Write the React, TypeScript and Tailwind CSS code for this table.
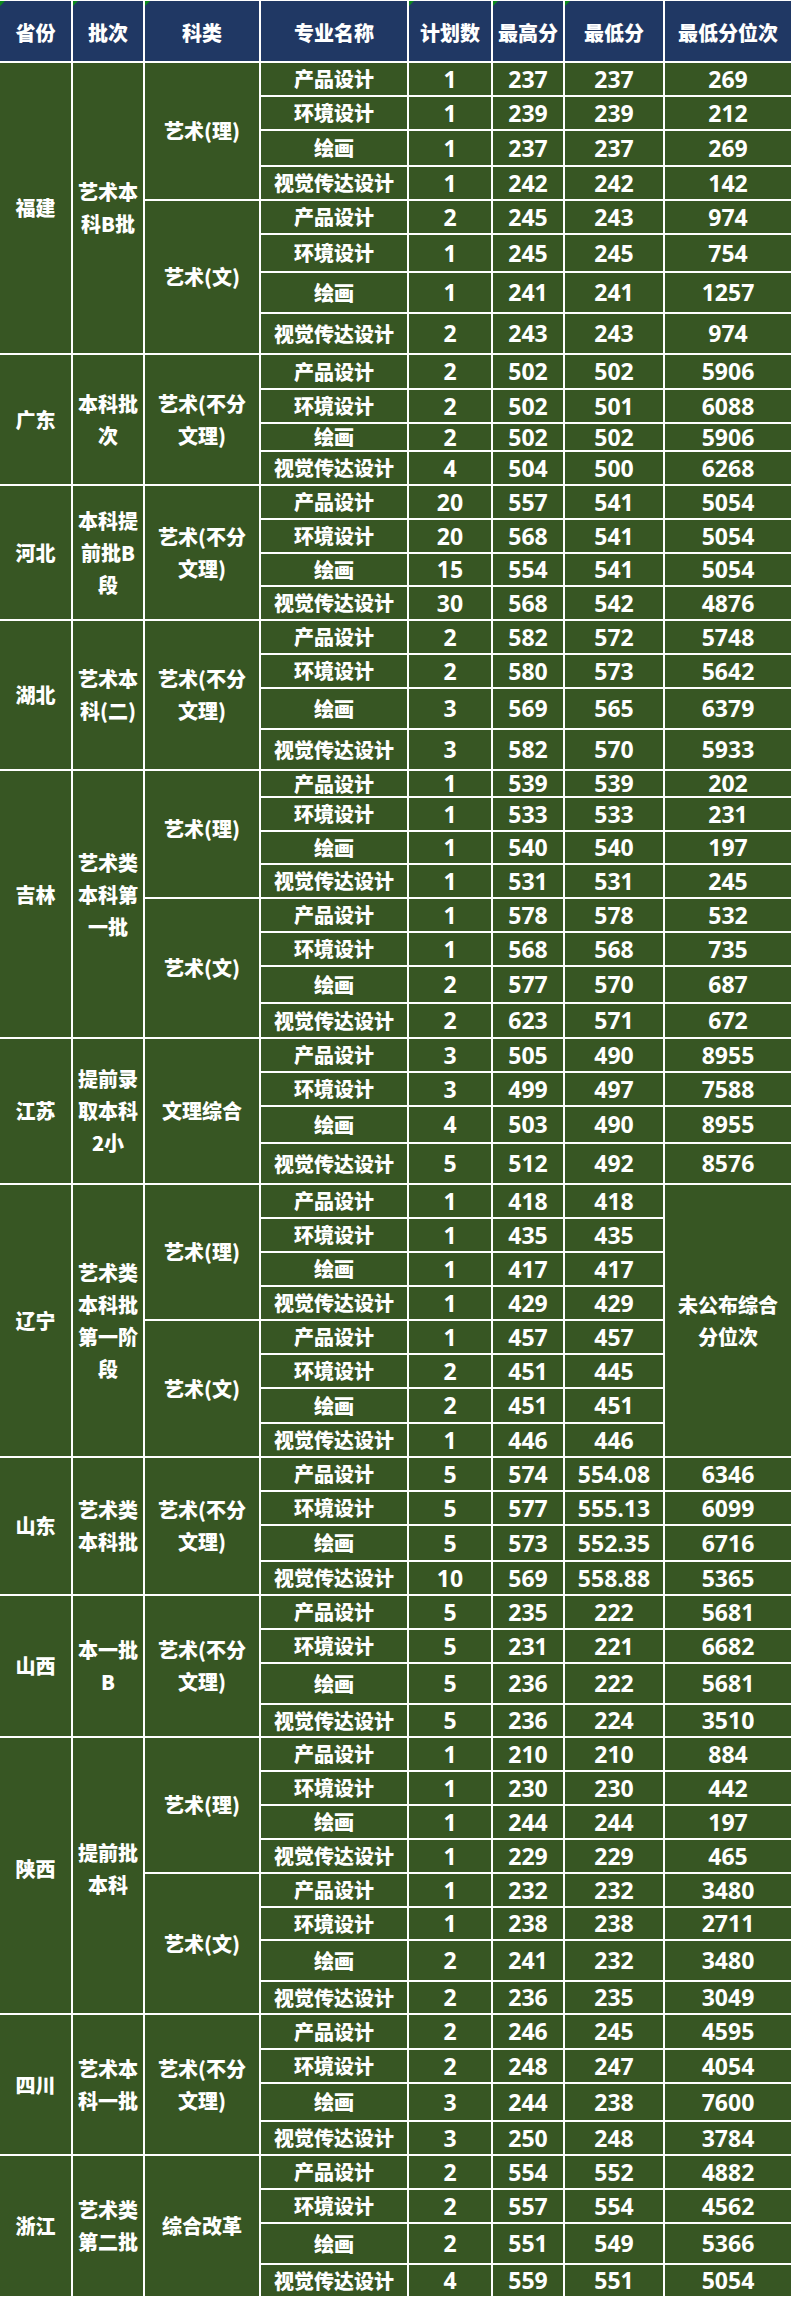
type Item = [string, string, string, string, string];
type Group = { cat: string; span: string; pad?: string; items: Item[] };
type Section = { prov: string; batch: string; span: string; pad?: string; groups: Group[]; note?: string };

// heights of every data row, in order (track height, the 2px white line is the grid gap)
const H = [
  'h-[32px]', 'h-[32px]', 'h-[34px]', 'h-[32px]', 'h-[32px]', 'h-[36px]', 'h-[39px]', 'h-[39px]',
  'h-[33px]', 'h-[32px]', 'h-[26px]', 'h-[32px]',
  'h-[32px]', 'h-[32px]', 'h-[31px]', 'h-[32px]',
  'h-[32px]', 'h-[32px]', 'h-[39px]', 'h-[39px]',
  'h-[25px]', 'h-[32px]', 'h-[31px]', 'h-[32px]', 'h-[32px]', 'h-[32px]', 'h-[35px]', 'h-[33px]',
  'h-[32px]', 'h-[32px]', 'h-[35px]', 'h-[39px]',
  'h-[32px]', 'h-[32px]', 'h-[32px]', 'h-[32px]', 'h-[32px]', 'h-[32px]', 'h-[33px]', 'h-[32px]',
  'h-[32px]', 'h-[32px]', 'h-[34px]', 'h-[32px]',
  'h-[32px]', 'h-[32px]', 'h-[39px]', 'h-[31px]',
  'h-[32px]', 'h-[32px]', 'h-[32px]', 'h-[32px]', 'h-[32px]', 'h-[31px]', 'h-[39px]', 'h-[31px]',
  'h-[33px]', 'h-[32px]', 'h-[36px]', 'h-[32px]',
  'h-[32px]', 'h-[32px]', 'h-[39px]', 'h-[31px]',
];

const NOFEN = '艺术(不分文理)';

const DATA: Section[] = [
  {
    prov: '福建', batch: '艺术本科B批', span: 'row-span-8',
    groups: [
      { cat: '艺术(理)', span: 'row-span-4', items: [
        ['产品设计', '1', '237', '237', '269'],
        ['环境设计', '1', '239', '239', '212'],
        ['绘画', '1', '237', '237', '269'],
        ['视觉传达设计', '1', '242', '242', '142'],
      ] },
      { cat: '艺术(文)', span: 'row-span-4', items: [
        ['产品设计', '2', '245', '243', '974'],
        ['环境设计', '1', '245', '245', '754'],
        ['绘画', '1', '241', '241', '1257'],
        ['视觉传达设计', '2', '243', '243', '974'],
      ] },
    ],
  },
  {
    prov: '广东', batch: '本科批次', span: 'row-span-4',
    groups: [
      { cat: NOFEN, span: 'row-span-4', items: [
        ['产品设计', '2', '502', '502', '5906'],
        ['环境设计', '2', '502', '501', '6088'],
        ['绘画', '2', '502', '502', '5906'],
        ['视觉传达设计', '4', '504', '500', '6268'],
      ] },
    ],
  },
  {
    prov: '河北', batch: '本科提前批B段', span: 'row-span-4',
    groups: [
      { cat: NOFEN, span: 'row-span-4', items: [
        ['产品设计', '20', '557', '541', '5054'],
        ['环境设计', '20', '568', '541', '5054'],
        ['绘画', '15', '554', '541', '5054'],
        ['视觉传达设计', '30', '568', '542', '4876'],
      ] },
    ],
  },
  {
    prov: '湖北', batch: '艺术本科(二)', span: 'row-span-4',
    groups: [
      { cat: NOFEN, span: 'row-span-4', items: [
        ['产品设计', '2', '582', '572', '5748'],
        ['环境设计', '2', '580', '573', '5642'],
        ['绘画', '3', '569', '565', '6379'],
        ['视觉传达设计', '3', '582', '570', '5933'],
      ] },
    ],
  },
  {
    prov: '吉林', batch: '艺术类本科第一批', span: 'row-span-8', pad: 'pb-[18px]',
    groups: [
      { cat: '艺术(理)', span: 'row-span-4', pad: 'pb-[10px]', items: [
        ['产品设计', '1', '539', '539', '202'],
        ['环境设计', '1', '533', '533', '231'],
        ['绘画', '1', '540', '540', '197'],
        ['视觉传达设计', '1', '531', '531', '245'],
      ] },
      { cat: '艺术(文)', span: 'row-span-4', items: [
        ['产品设计', '1', '578', '578', '532'],
        ['环境设计', '1', '568', '568', '735'],
        ['绘画', '2', '577', '570', '687'],
        ['视觉传达设计', '2', '623', '571', '672'],
      ] },
    ],
  },
  {
    prov: '江苏', batch: '提前录取本科2小', span: 'row-span-4',
    groups: [
      { cat: '文理综合', span: 'row-span-4', items: [
        ['产品设计', '3', '505', '490', '8955'],
        ['环境设计', '3', '499', '497', '7588'],
        ['绘画', '4', '503', '490', '8955'],
        ['视觉传达设计', '5', '512', '492', '8576'],
      ] },
    ],
  },
  {
    prov: '辽宁', batch: '艺术类本科批第一阶段', span: 'row-span-8', note: '未公布综合分位次',
    groups: [
      { cat: '艺术(理)', span: 'row-span-4', items: [
        ['产品设计', '1', '418', '418', ''],
        ['环境设计', '1', '435', '435', ''],
        ['绘画', '1', '417', '417', ''],
        ['视觉传达设计', '1', '429', '429', ''],
      ] },
      { cat: '艺术(文)', span: 'row-span-4', items: [
        ['产品设计', '1', '457', '457', ''],
        ['环境设计', '2', '451', '445', ''],
        ['绘画', '2', '451', '451', ''],
        ['视觉传达设计', '1', '446', '446', ''],
      ] },
    ],
  },
  {
    prov: '山东', batch: '艺术类本科批', span: 'row-span-4',
    groups: [
      { cat: NOFEN, span: 'row-span-4', items: [
        ['产品设计', '5', '574', '554.08', '6346'],
        ['环境设计', '5', '577', '555.13', '6099'],
        ['绘画', '5', '573', '552.35', '6716'],
        ['视觉传达设计', '10', '569', '558.88', '5365'],
      ] },
    ],
  },
  {
    prov: '山西', batch: '本一批B', span: 'row-span-4',
    groups: [
      { cat: NOFEN, span: 'row-span-4', items: [
        ['产品设计', '5', '235', '222', '5681'],
        ['环境设计', '5', '231', '221', '6682'],
        ['绘画', '5', '236', '222', '5681'],
        ['视觉传达设计', '5', '236', '224', '3510'],
      ] },
    ],
  },
  {
    prov: '陕西', batch: '提前批本科', span: 'row-span-8', pad: 'pb-[14px]',
    groups: [
      { cat: '艺术(理)', span: 'row-span-4', items: [
        ['产品设计', '1', '210', '210', '884'],
        ['环境设计', '1', '230', '230', '442'],
        ['绘画', '1', '244', '244', '197'],
        ['视觉传达设计', '1', '229', '229', '465'],
      ] },
      { cat: '艺术(文)', span: 'row-span-4', items: [
        ['产品设计', '1', '232', '232', '3480'],
        ['环境设计', '1', '238', '238', '2711'],
        ['绘画', '2', '241', '232', '3480'],
        ['视觉传达设计', '2', '236', '235', '3049'],
      ] },
    ],
  },
  {
    prov: '四川', batch: '艺术本科一批', span: 'row-span-4',
    groups: [
      { cat: NOFEN, span: 'row-span-4', items: [
        ['产品设计', '2', '246', '245', '4595'],
        ['环境设计', '2', '248', '247', '4054'],
        ['绘画', '3', '244', '238', '7600'],
        ['视觉传达设计', '3', '250', '248', '3784'],
      ] },
    ],
  },
  {
    prov: '浙江', batch: '艺术类第二批', span: 'row-span-4',
    groups: [
      { cat: '综合改革', span: 'row-span-4', items: [
        ['产品设计', '2', '554', '552', '4882'],
        ['环境设计', '2', '557', '554', '4562'],
        ['绘画', '2', '551', '549', '5366'],
        ['视觉传达设计', '4', '559', '551', '5054'],
      ] },
    ],
  },
];

const CJK = "font-['Noto_Sans_CJK_SC',sans-serif] text-[20px] font-black";
const NUM = "font-['Open_Sans','Noto_Sans_CJK_SC',sans-serif] text-[23px] font-bold";
const CELL = 'flex items-center justify-center text-center bg-[#375623] text-white';

const HEAD: [string, boolean][] = [
  ['省份', true], ['批次', true], ['科类', true], ['专业名称', false],
  ['计划数', true], ['最高分', true], ['最低分', true], ['最低分位次', false],
];

function buildCells() {
  const cells: React.ReactNode[] = [];
  let r = 0;
  DATA.forEach((sec, si) => {
    sec.groups.forEach((g, gi) => {
      g.items.forEach((it, ii) => {
        const first = gi === 0 && ii === 0;
        const h = H[r];
        if (first) {
          cells.push(
            <div key={`p${si}`} className={`${sec.span} ${CELL} ${CJK} leading-[32px] ${sec.pad ?? ''}`}>{sec.prov}</div>,
            <div key={`b${si}`} className={`${sec.span} ${CELL} ${CJK} leading-[32px] ${sec.pad ?? ''}`}>{sec.batch}</div>,
          );
        }
        if (ii === 0) {
          cells.push(
            <div key={`c${si}-${gi}`} className={`${g.span} ${CELL} ${CJK} leading-[32px] px-[8px] ${g.pad ?? ''}`}>{g.cat}</div>,
          );
        }
        cells.push(
          <div key={`n${r}`} className={`${h} ${CELL} ${CJK} leading-none whitespace-nowrap`}>{it[0]}</div>,
          <div key={`a${r}`} className={`${h} ${CELL} ${NUM} leading-none`}>{it[1]}</div>,
          <div key={`x${r}`} className={`${h} ${CELL} ${NUM} leading-none`}>{it[2]}</div>,
          <div key={`m${r}`} className={`${h} ${CELL} ${NUM} leading-none`}>{it[3]}</div>,
        );
        if (sec.note) {
          if (first) {
            cells.push(
              <div key={`k${si}`} className={`${sec.span} ${CELL} ${CJK} leading-[32px] px-2`}>{sec.note}</div>,
            );
          }
        } else {
          cells.push(
            <div key={`k${r}`} className={`${h} ${CELL} ${NUM} leading-none`}>{it[4]}</div>,
          );
        }
        r++;
      });
    });
  });
  return cells;
}

export default function App() {
  return (
    <div className="w-[791px] bg-white pt-px pb-[3px]">
      <div className="grid grid-cols-[71px_70px_114px_146px_82px_70px_98px_126px] gap-[2px]">
        {HEAD.map(([t, mark]) => (
          <div
            key={t}
            className={`relative h-[60px] pt-[3px] flex items-center justify-center bg-[#203864] text-white whitespace-nowrap ${CJK}`}
          >
            {mark && (
              <span className="absolute left-0 top-0 w-0 h-0 border-t-[5px] border-r-[5px] border-t-[#0b8a1c] border-r-transparent" />
            )}
            {t}
          </div>
        ))}
        {buildCells()}
      </div>
    </div>
  );
}
